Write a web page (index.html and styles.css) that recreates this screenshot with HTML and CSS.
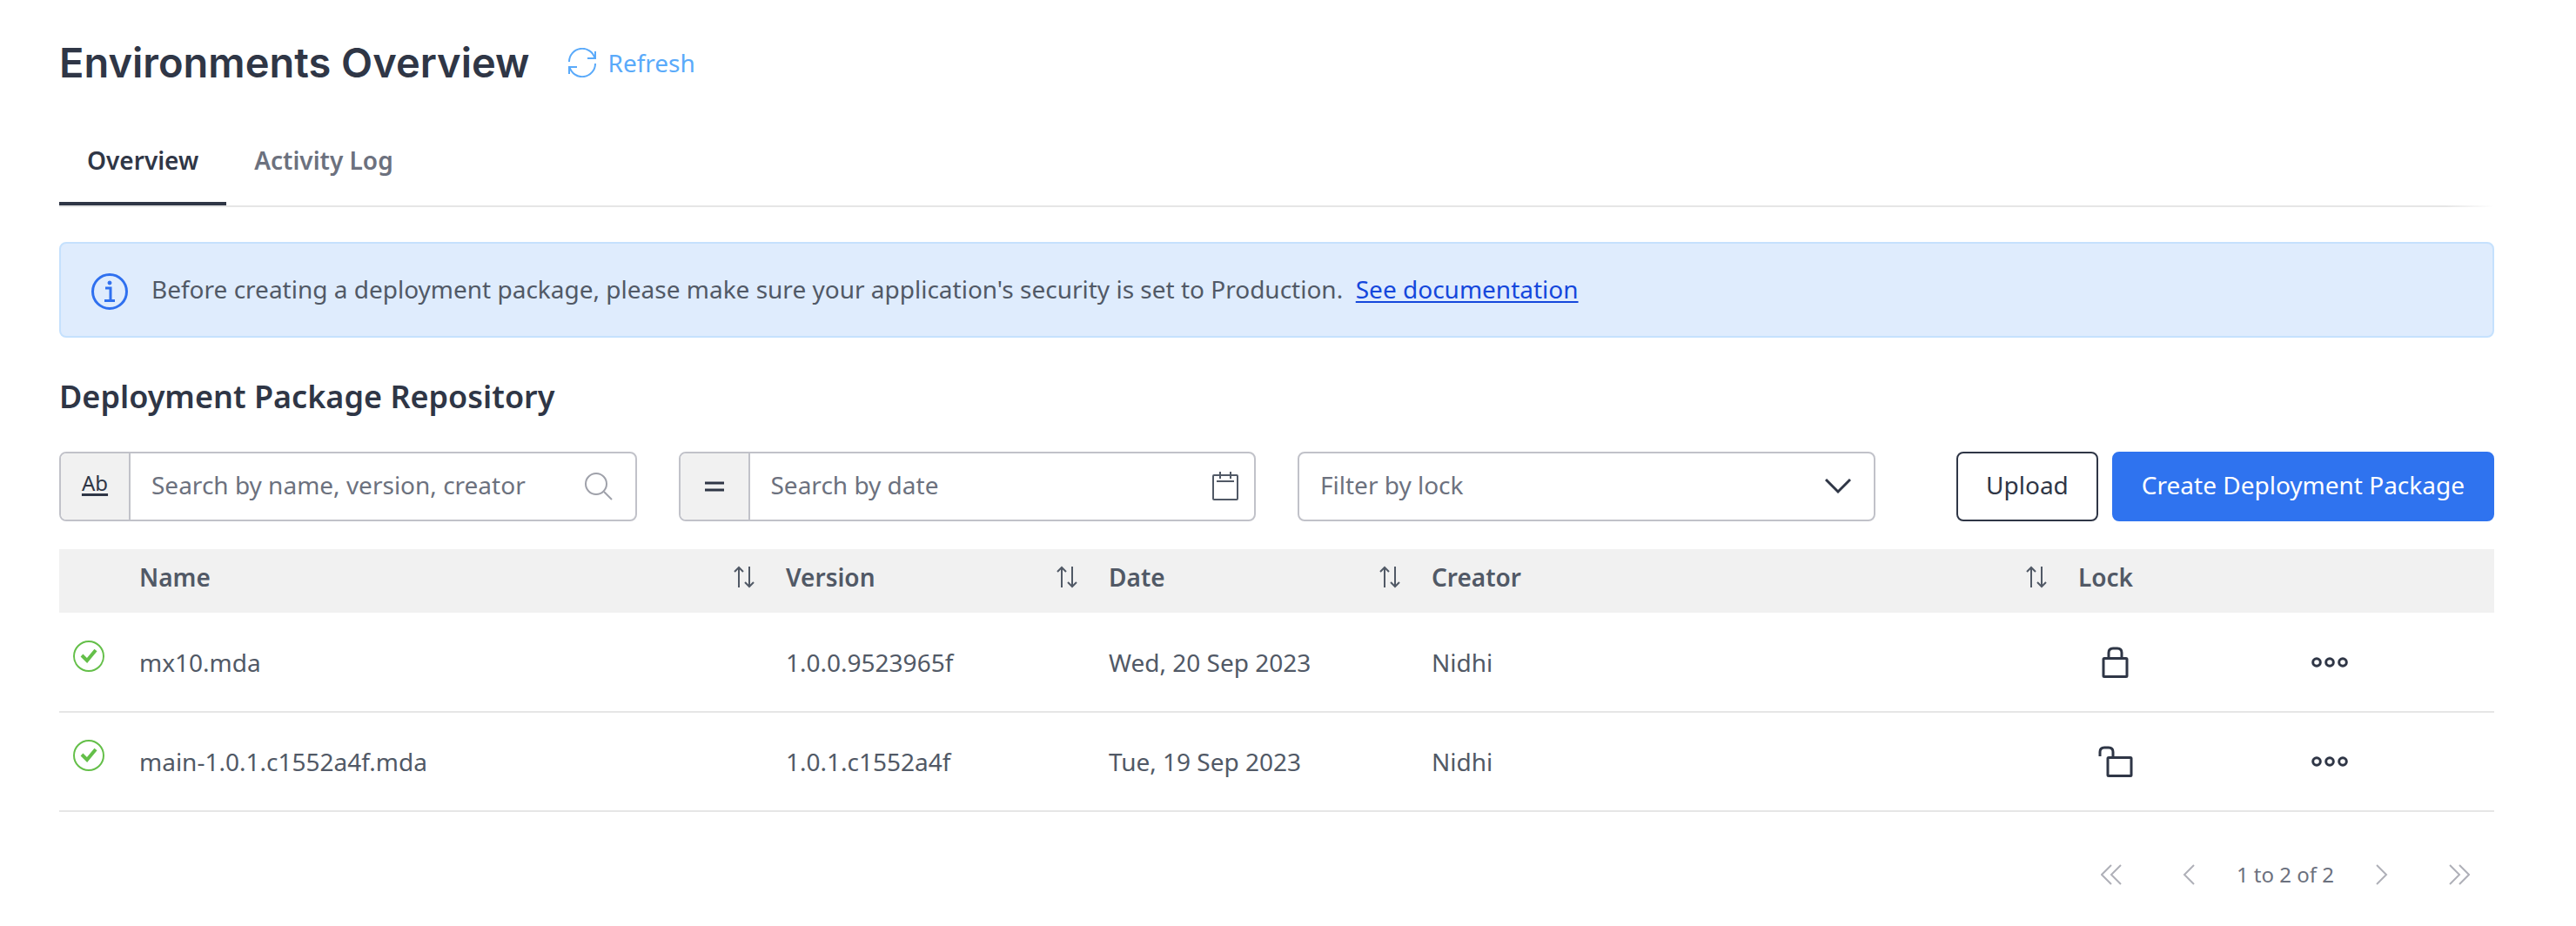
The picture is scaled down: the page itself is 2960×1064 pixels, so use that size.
FILE: index.html
```html
<!DOCTYPE html>
<html lang="en">
<head>
<meta charset="utf-8">
<meta name="viewport" content="width=device-width, initial-scale=1">
<title>Environments Overview</title>
<link rel="stylesheet" href="styles.css">
</head>
<body>
<svg class="sprite" aria-hidden="true">
  <symbol id="i-sort" viewBox="0 0 24 26"><path d="M6 25V2M1 7l5-5 5 5M18 1v23M13 19l5 5 5-5"/></symbol>
  <symbol id="i-check" viewBox="1 1 36 36"><circle cx="19" cy="19" r="17" stroke-width="2"/><path d="M11 18l6 6 10-12" stroke-width="4"/></symbol>
  <symbol id="i-more" viewBox="0 0 42 12"><circle cx="6" cy="6" r="4.3"/><circle cx="21" cy="6" r="4.3"/><circle cx="36" cy="6" r="4.3"/></symbol>
</svg>
<main class="page">
  <header class="head">
    <h1 class="title">Environments Overview</h1>
    <button class="refresh" type="button">
      <svg class="icon" width="34" height="34" viewBox="0 0 34 34" fill="none" stroke="currentColor" stroke-width="2"><path d="M2 16A15 15 0 0 1 31.500 12M32 4v8h-9M32 18A15 15 0 0 1 2.500 22M2 30v-8h9"/></svg>
      Refresh
    </button>
  </header>

  <nav class="tabs">
    <a class="tab tab-active" href="#overview">Overview</a>
    <a class="tab" href="#activity">Activity Log</a>
  </nav>

  <section class="notice">
    <svg class="icon" width="44" height="44" viewBox="0 0 44 44" fill="none" stroke="currentColor" stroke-width="3"><circle cx="22" cy="22" r="19.500"/><path d="M17 18h6v14M16 32.500h12"/><circle cx="22" cy="12" r="2" fill="currentColor" stroke-width="1"/></svg>
    <p class="notice-text">Before creating a deployment package, please make sure your application's security is set to Production.&nbsp; <a class="doc-link" href="#docs">See documentation</a></p>
  </section>

  <h2 class="subtitle">Deployment Package Repository</h2>

  <div class="toolbar">
    <div class="field">
      <button class="prefix prefix-text" type="button" aria-label="Match type: contains">Ab</button>
      <input class="input" type="text" aria-label="Search by name, version, creator" placeholder="Search by name, version, creator">
      <svg class="icon search-icon" width="32" height="32" viewBox="0 0 32 32" fill="none" stroke="currentColor" stroke-width="2"><circle cx="13" cy="13" r="12"/><path d="M22 22l9 9"/></svg>
    </div>
    <div class="field">
      <button class="prefix" type="button" aria-label="Match type: equal"><svg class="icon" width="22" height="14" viewBox="0 0 22 14" fill="none" stroke="currentColor" stroke-width="3"><path d="M0 3h22M0 11h22"/></svg></button>
      <input class="input" type="text" aria-label="Search by date" placeholder="Search by date">
      <svg class="icon date-icon" width="30" height="34" viewBox="0 0 30 34" fill="none" stroke="currentColor" stroke-width="2"><rect x="1" y="4" width="28" height="28" rx="1"/><path d="M5 11h20M9 0v8M21 0v8"/></svg>
    </div>
    <div class="field">
      <select class="select" aria-label="Filter by lock"><option>Filter by lock</option><option>Locked</option><option>Unlocked</option></select>
      <svg class="icon select-icon" width="30" height="18" viewBox="0 0 30 18" fill="none" stroke="currentColor" stroke-width="3"><path d="M1 1l14 14L29 1"/></svg>
    </div>
    <div class="actions">
      <button class="btn" type="button">Upload</button>
      <button class="btn btn-primary" type="button">Create Deployment Package</button>
    </div>
  </div>

  <table class="grid">
    <colgroup><col class="c-status"><col class="c-name"><col class="c-mid"><col class="c-mid"><col class="c-name"><col class="c-lock"><col></colgroup>
    <thead>
      <tr>
        <td></td>
        <th scope="col"><div class="th">Name<svg class="sort"><use href="#i-sort"/></svg></div></th>
        <th scope="col"><div class="th">Version<svg class="sort"><use href="#i-sort"/></svg></div></th>
        <th scope="col"><div class="th">Date<svg class="sort"><use href="#i-sort"/></svg></div></th>
        <th scope="col"><div class="th">Creator<svg class="sort"><use href="#i-sort"/></svg></div></th>
        <th scope="col"><div class="th">Lock</div></th>
        <td></td>
      </tr>
    </thead>
    <tbody>
      <tr>
        <td class="status"><svg class="check"><use href="#i-check"/></svg></td>
        <td>mx10.mda</td>
        <td>1.0.0.9523965f</td>
        <td>Wed, 20 Sep 2023</td>
        <td>Nidhi</td>
        <td class="lock"><svg class="icon" width="42" height="36" viewBox="0 0 42 36" fill="none" stroke="currentColor" stroke-width="3"><rect x="7" y="13.500" width="27" height="21" rx="1"/><path d="M13 14V7q0-5 5-5h5q5 0 5 5v7"/></svg></td>
        <td><button class="more-btn" type="button" aria-label="Actions for mx10.mda"><svg class="dots"><use href="#i-more"/></svg></button></td>
      </tr>
      <tr>
        <td class="status"><svg class="check"><use href="#i-check"/></svg></td>
        <td>main-1.0.1.c1552a4f.mda</td>
        <td>1.0.1.c1552a4f</td>
        <td>Tue, 19 Sep 2023</td>
        <td>Nidhi</td>
        <td class="lock"><svg class="icon" width="42" height="36" viewBox="0 0 42 36" fill="none" stroke="currentColor" stroke-width="3"><rect x="12" y="13.500" width="27" height="21" rx="1"/><path d="M3 12V7q0-5 5-5h5q5 0 5 5v7"/></svg></td>
        <td><button class="more-btn" type="button" aria-label="Actions for main-1.0.1.c1552a4f.mda"><svg class="dots"><use href="#i-more"/></svg></button></td>
      </tr>
    </tbody>
  </table>

  <nav class="pager" aria-label="Pagination">
    <button class="page-btn page-edge" type="button" aria-label="First page"><svg class="icon" width="24" height="24" viewBox="0 0 24 24" fill="none" stroke="currentColor" stroke-width="2"><path d="M12 1L1 12l11 11M23 1L12 12l11 11"/></svg></button>
    <button class="page-btn" type="button" aria-label="Previous page"><svg class="icon" width="14" height="24" viewBox="0 0 14 24" fill="none" stroke="currentColor" stroke-width="2"><path d="M13 1L2 12l11 11"/></svg></button>
    <span class="page-status">1 to 2 of 2</span>
    <button class="page-btn" type="button" aria-label="Next page"><svg class="icon" width="14" height="24" viewBox="0 0 14 24" fill="none" stroke="currentColor" stroke-width="2"><path d="M1 1l11 11L1 23"/></svg></button>
    <button class="page-btn page-edge" type="button" aria-label="Last page"><svg class="icon" width="24" height="24" viewBox="0 0 24 24" fill="none" stroke="currentColor" stroke-width="2"><path d="M1 1l11 11L1 23M12 1l11 11-11 11"/></svg></button>
  </nav>
</main>
</body>
</html>
```
FILE: styles.css
```css
* { box-sizing: border-box; }

body {
  margin: 0;
  background: #fff;
  color: #515966;
  font: 28px/40px "Noto Sans", sans-serif;
}

button, input, select { font: inherit; color: inherit; margin: 0; }
button { cursor: pointer; }
.icon { display: block; flex: none; }
.sprite { position: absolute; width: 0; height: 0; }

.page { padding: 40px 94px 24px 68px; }

.head { display: flex; align-items: center; gap: 44px; height: 64px; }
.title { margin: 0; color: #2f3646; font: 600 47px/64px "Inter", sans-serif; }
.refresh {
  display: flex; align-items: center; gap: 12px;
  padding: 0; border: 0; background: none; color: #5aaafa;
}

.tabs {
  display: flex;
  margin-top: 46px;
  background: linear-gradient(to right, #e6e6e6 98%, transparent) bottom / 100% 2px no-repeat;
  padding-bottom: 2px;
}
.tab {
  padding: 14px 32px 28px;
  border-bottom: 4px solid transparent;
  color: #6c717e; font-weight: 600; text-decoration: none;
}
.tab-active { color: #2f3646; border-color: #2f3646; }

.notice {
  display: flex; align-items: center; gap: 26px;
  height: 110px; margin-top: 40px; padding: 4px 34px 0;
  border: 2px solid #c5e1fd; border-radius: 8px;
  background: #dfecfd; color: #2f70ef;
}
.notice-text { margin: 0; padding-bottom: 6px; color: #515966; }
.doc-link { color: #1447dc; text-underline-offset: 3px; text-decoration-thickness: 2px; }

.subtitle { margin: 44px 0 0; color: #2f3646; font-size: 36px; font-weight: 600; line-height: 48px; }

.toolbar { display: grid; grid-template-columns: repeat(4, minmax(0, 1fr)); column-gap: 48px; margin-top: 39px; }
.field {
  display: flex; align-items: center; position: relative;
  height: 80px; border: 2px solid #c1c2c9; border-radius: 8px; background: #fff; overflow: hidden;
}
.prefix {
  display: flex; align-items: center; justify-content: center; flex: none;
  width: 80px; height: 100%; padding: 0;
  border: 0; border-right: 2px solid #c1c2c9; background: #f1f1f1; color: #2f3646;
}
.prefix-text { padding-bottom: 8px; font-size: 24px; text-decoration: underline; text-decoration-thickness: 3px; text-underline-offset: 3px; }
.input { flex: 1; min-width: 0; height: 100%; padding: 0 24px 4px; border: 0; outline: 0; background: none; }
.input::placeholder { color: #6c717e; opacity: 1; }
.search-icon { margin-right: 26px; color: #9fa1aa; }
.date-icon { margin-right: 18px; color: #515966; }
.select { appearance: none; width: 100%; height: 100%; padding: 0 80px 4px 24px; border: 0; outline: 0; background: none; color: #6c717e; }
.select-icon { position: absolute; right: 26px; pointer-events: none; color: #2f3646; }

.actions { display: flex; justify-content: flex-end; gap: 16px; }
.btn {
  height: 80px; padding: 0 32px 4px; border: 2px solid #2f3646; border-radius: 8px;
  background: #fff; color: #2f3646; white-space: nowrap;
}
.btn-primary { border-color: #2f73ef; background: #2f73ef; color: #fff; }

.grid { width: 100%; margin-top: 32px; border-collapse: collapse; table-layout: fixed; }
.c-status { width: 76px; }
.c-name { width: 743px; }
.c-mid { width: 371px; }
.c-lock { width: 268px; }
.grid td, .grid th { padding: 0 16px; text-align: left; }
.grid thead { background: #f1f1f1; }
.grid thead tr { height: 73px; }
.grid thead th { padding-right: 20px; padding-bottom: 10px; font-weight: 600; }
.th { display: flex; align-items: center; justify-content: space-between; }
.sort { width: 24px; height: 26px; fill: none; stroke: #515966; stroke-width: 2; }
.grid tbody tr { height: 114px; border-bottom: 2px solid #e6e6e6; }
.grid tbody .status { padding: 0 0 14px 16px; }
.check { display: block; width: 36px; height: 36px; fill: none; stroke: #64bf49; }
.grid .lock { padding-left: 38px; color: #2f3646; }
.more-btn { display: flex; padding: 0; border: 0; background: none; color: #2f3646; }
.dots { width: 42px; height: 12px; fill: none; stroke: currentColor; stroke-width: 3; }

.pager { display: flex; align-items: center; justify-content: flex-end; gap: 48px; margin-top: 52px; padding-right: 6px; }
.page-btn { padding: 0; border: 0; background: none; color: #afb0b8; }
.page-edge { padding: 0 22px; }
.page-status { color: #6c717e; font-size: 24px; }
```
